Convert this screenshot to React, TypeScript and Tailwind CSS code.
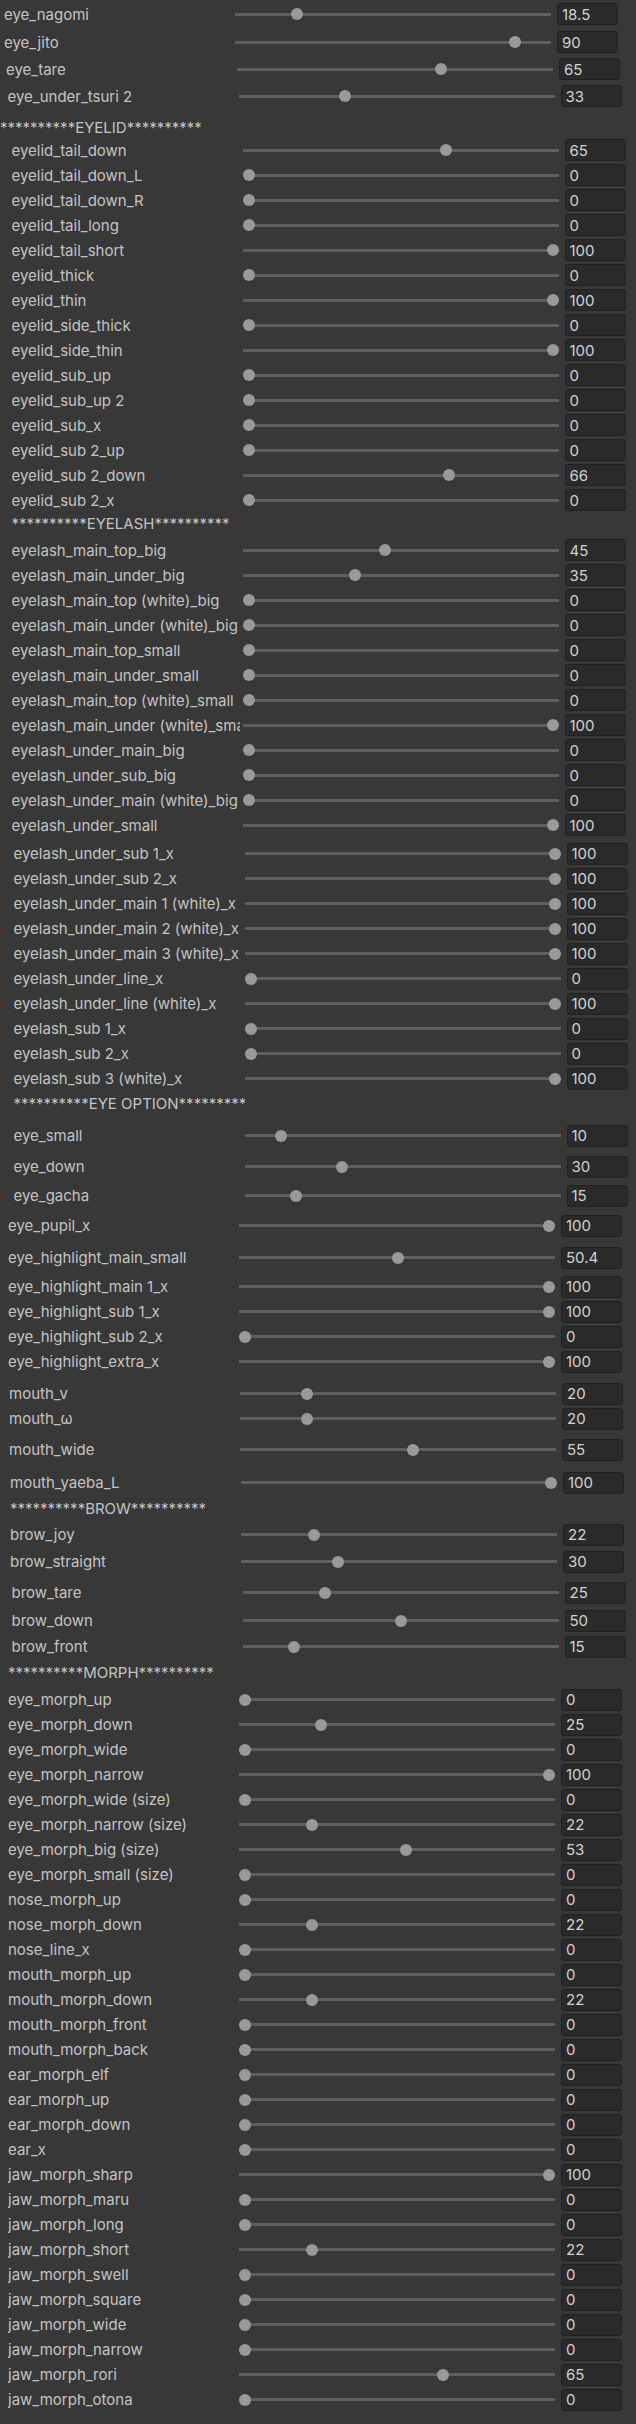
type Item = {
  label: string;
  value?: number;
  header?: boolean;
  mt?: string;
};

type Block = {
  pl: string;
  items: Item[];
};

const r = (label: string, value: number, mt = ""): Item => ({ label, value, mt });
const h = (label: string, mt = ""): Item => ({ label, header: true, mt });

const blocks: Block[] = [
  { pl: "pl-[4px]", items: [r("eye_nagomi", 18.5, "mt-[1.5px]"), r("eye_jito", 90, "mt-[3px]")] },
  { pl: "pl-[6px]", items: [r("eye_tare", 65, "mt-[2px]")] },
  { pl: "pl-[7.5px]", items: [r("eye_under_tsuri 2", 33, "mt-[2px]")] },
  { pl: "pl-0", items: [h("**********EYELID**********", "mt-[10.5px]")] },
  {
    pl: "pl-[11.5px]",
    items: [
      r("eyelid_tail_down", 65, "mt-[0.5px]"),
      r("eyelid_tail_down_L", 0),
      r("eyelid_tail_down_R", 0),
      r("eyelid_tail_long", 0),
      r("eyelid_tail_short", 100),
      r("eyelid_thick", 0),
      r("eyelid_thin", 100),
      r("eyelid_side_thick", 0),
      r("eyelid_side_thin", 100),
      r("eyelid_sub_up", 0),
      r("eyelid_sub_up 2", 0),
      r("eyelid_sub_x", 0),
      r("eyelid_sub 2_up", 0),
      r("eyelid_sub 2_down", 66),
      r("eyelid_sub 2_x", 0),
      h("**********EYELASH**********", "mt-[2px]"),
      r("eyelash_main_top_big", 45, "mt-[5px]"),
      r("eyelash_main_under_big", 35),
      r("eyelash_main_top (white)_big", 0),
      r("eyelash_main_under (white)_big", 0),
      r("eyelash_main_top_small", 0),
      r("eyelash_main_under_small", 0),
      r("eyelash_main_top (white)_small", 0),
      r("eyelash_main_under (white)_small", 100),
      r("eyelash_under_main_big", 0),
      r("eyelash_under_sub_big", 0),
      r("eyelash_under_main (white)_big", 0),
      r("eyelash_under_small", 100),
    ],
  },
  {
    pl: "pl-[13.5px]",
    items: [
      r("eyelash_under_sub 1_x", 100, "mt-[3.5px]"),
      r("eyelash_under_sub 2_x", 100),
      r("eyelash_under_main 1 (white)_x", 100),
      r("eyelash_under_main 2 (white)_x", 100),
      r("eyelash_under_main 3 (white)_x", 100),
      r("eyelash_under_line_x", 0),
      r("eyelash_under_line (white)_x", 100),
      r("eyelash_sub 1_x", 0),
      r("eyelash_sub 2_x", 0),
      r("eyelash_sub 3 (white)_x", 100),
      h("**********EYE OPTION**********", "mt-[3.5px]"),
      r("eye_small", 10, "mt-[10.5px]"),
      r("eye_down", 30, "mt-[6px]"),
      r("eye_gacha", 15, "mt-[4px]"),
    ],
  },
  {
    pl: "pl-[8px]",
    items: [
      r("eye_pupil_x", 100, "mt-[5px]"),
      r("eye_highlight_main_small", 50.4, "mt-[7px]"),
      r("eye_highlight_main 1_x", 100, "mt-[4px]"),
      r("eye_highlight_sub 1_x", 100),
      r("eye_highlight_sub 2_x", 0),
      r("eye_highlight_extra_x", 100),
    ],
  },
  {
    pl: "pl-[9px]",
    items: [r("mouth_v", 20, "mt-[7px]"), r("mouth_ω", 20), r("mouth_wide", 55, "mt-[6px]")],
  },
  {
    pl: "pl-[10px]",
    items: [
      r("mouth_yaeba_L", 100, "mt-[8px]"),
      h("**********BROW**********", "mt-[5px]"),
      r("brow_joy", 22, "mt-[4px]"),
      r("brow_straight", 30, "mt-[2px]"),
    ],
  },
  {
    pl: "pl-[11.5px]",
    items: [r("brow_tare", 25, "mt-[6px]"), r("brow_down", 50, "mt-[3px]"), r("brow_front", 15, "mt-[1px]")],
  },
  {
    pl: "pl-[8px]",
    items: [
      h("**********MORPH**********", "mt-[5px]"),
      r("eye_morph_up", 0, "mt-[5px]"),
      r("eye_morph_down", 25),
      r("eye_morph_wide", 0),
      r("eye_morph_narrow", 100),
      r("eye_morph_wide (size)", 0),
      r("eye_morph_narrow (size)", 22),
      r("eye_morph_big (size)", 53),
      r("eye_morph_small (size)", 0),
      r("nose_morph_up", 0),
      r("nose_morph_down", 22),
      r("nose_line_x", 0),
      r("mouth_morph_up", 0),
      r("mouth_morph_down", 22),
      r("mouth_morph_front", 0),
      r("mouth_morph_back", 0),
      r("ear_morph_elf", 0),
      r("ear_morph_up", 0),
      r("ear_morph_down", 0),
      r("ear_x", 0),
      r("jaw_morph_sharp", 100),
      r("jaw_morph_maru", 0),
      r("jaw_morph_long", 0),
      r("jaw_morph_short", 22),
      r("jaw_morph_swell", 0),
      r("jaw_morph_square", 0),
      r("jaw_morph_wide", 0),
      r("jaw_morph_narrow", 0),
      r("jaw_morph_rori", 65),
      r("jaw_morph_otona", 0),
    ],
  },
];

function SliderRow({ label, value = 0, mt }: Item) {
  // thumb is 12px, travels inside the 316px track
  const left = (value / 100) * 304;
  return (
    <div className={`flex h-[25px] items-center ${mt}`}>
      <div className="w-[228px] shrink-0 overflow-hidden whitespace-nowrap leading-[21px] text-[#c4c4c4]">
        {label}
      </div>
      <div className="relative ml-[3px] h-[25px] w-[316px] shrink-0">
        <div className="absolute left-0 right-0 top-[11px] h-[3px] bg-[#5e5e5e]" />
        <div
          className="absolute top-[6.5px] h-[12px] w-[12px] rounded-full bg-[#999999]"
          style={{ left: `${left}px` }}
        />
      </div>
      <div className="ml-[6px] flex h-[22px] w-[61px] shrink-0 items-center rounded-[3px] border border-[#212121] bg-[#2a2a2a] pl-[4px] text-[#d2d2d2]">
        {value}
      </div>
    </div>
  );
}

function Header({ label, mt }: Item) {
  return (
    <div className={`flex h-[18px] items-center ${mt}`}>
      <div className="w-[231px] overflow-hidden whitespace-nowrap leading-[18px] text-[#c4c4c4]">{label}</div>
    </div>
  );
}

export default function App() {
  return (
    <div className="min-h-[2424px] w-full overflow-hidden bg-[#383838] font-['Inter',sans-serif] text-[15px] leading-none">
      {blocks.map((block, bi) => (
        <div key={bi} className={block.pl}>
          {block.items.map((item, ii) =>
            item.header ? <Header key={ii} {...item} /> : <SliderRow key={ii} {...item} />
          )}
        </div>
      ))}
    </div>
  );
}
